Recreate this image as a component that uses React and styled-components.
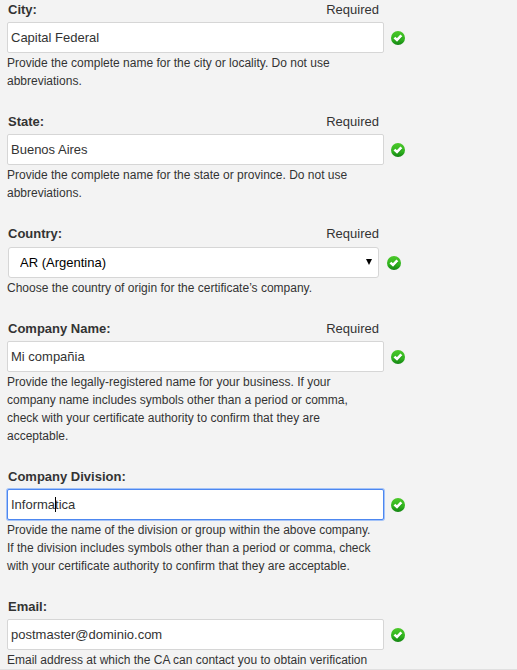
import React, { useId } from 'react'
import styled, { createGlobalStyle } from 'styled-components'

const GlobalStyle = createGlobalStyle`
    html {
        overflow: hidden;
    }
    body {
        margin: 0;
        background: #f3f3f3;
        color: #333;
        font-family: "Liberation Sans", Arial, sans-serif;
    }
`
const Form = styled.form`
    padding-top: 1px;
    border-bottom: 1px solid #e0e0e0;
`
const Field = styled.div`
    max-width: 377px;
    margin: 0 30px 23px 7px;
    &:last-child {
        margin-bottom: 0;
    }
`
const FieldHeader = styled.div`
    display: flex;
    justify-content: space-between;
    padding: 0 5px 0 1px;
    font-size: 13px;
    line-height: 18px;
    margin-bottom: 3px;
`
const Label = styled.label`
    font-weight: 700;
`
const ControlRow = styled.div`
    display: flex;
    align-items: center;
    gap: ${({ $select }) => ($select ? '8px' : '7px')};
    padding: ${({ $select }) => ($select ? '1px 0 0 1px' : '0')};
    margin-right: ${({ $select }) => ($select ? '-17px' : '-21px')};
`
const Control = styled.div`
    position: relative;
    display: flex;
    flex: 1;
    min-width: 0;
`
const TextInput = styled.input`
    flex: 1;
    min-width: 0;
    box-sizing: border-box;
    height: 31px;
    padding: 0 3px;
    border: 1px solid ${({ $active }) => ($active ? '#4d87f0' : '#d6d6d6')};
    border-radius: 2px;
    background: #fff;
    box-shadow: ${({ $active }) => ($active ? '0 0 0 1px #a4c3f8' : 'none')};
    color: #333;
    font: 13px "Liberation Sans", Arial, sans-serif;
    outline: none;
`
const Caret = styled.span`
    position: absolute;
    left: 48px;
    top: 8px;
    width: 1px;
    height: 15px;
    background: #000;
`
const Select = styled.select`
    flex: 1;
    min-width: 0;
    box-sizing: border-box;
    height: 31px;
    padding: 0 11px;
    border: 1px solid #d6d6d6;
    border-radius: 3px;
    background: #fff;
    color: #000;
    font: 13px "Liberation Sans", Arial, sans-serif;
    appearance: none;
    outline: none;
`
const Arrow = styled.svg`
    position: absolute;
    right: 7px;
    top: 12px;
    pointer-events: none;
`
const CheckSvg = styled.svg`
    flex: none;
    display: block;
`
const Help = styled.p`
    margin: 0;
    padding: 1px 8px 0 0;
    font-size: 12px;
    line-height: 18px;
`

const Check = () => {
    const id = useId()
    return (
        <CheckSvg width="14" height="14" viewBox="0 0 14 14" aria-hidden="true">
            <defs>
                <linearGradient id={id} x1="0" y1="0" x2="0" y2="1">
                    <stop offset="0" stopColor="#4cc82a" />
                    <stop offset="0.6" stopColor="#30b41e" />
                    <stop offset="1" stopColor="#128212" />
                </linearGradient>
            </defs>
            <circle cx="7" cy="7" r="7" fill={`url(#${id})`} />
            <path d="M3.9 7.6l2.4 2.2 4.3-4.5" fill="none" stroke="#127012" strokeOpacity="0.5" strokeWidth="2.6" />
            <path d="M3.4 6.6l2.6 2.4 4.4-4.6" fill="none" stroke="#fff" strokeWidth="2.6" />
        </CheckSvg>
    )
}

const fields = [
    { label: 'City:', required: true, value: 'Capital Federal', help: 'Provide the complete name for the city or locality. Do not use abbreviations.' },
    { label: 'State:', required: true, value: 'Buenos Aires', help: 'Provide the complete name for the state or province. Do not use abbreviations.' },
    { label: 'Country:', required: true, options: ['AR (Argentina)'], help: 'Choose the country of origin for the certificate’s company.' },
    { label: 'Company Name:', required: true, value: 'Mi compañia', help: 'Provide the legally-registered name for your business. If your company name includes symbols other than a period or comma, check with your certificate authority to confirm that they are acceptable.' },
    { label: 'Company Division:', value: 'Informatica', active: true, help: 'Provide the name of the division or group within the above company. If the division includes symbols other than a period or comma, check with your certificate authority to confirm that they are acceptable.' },
    { label: 'Email:', value: 'postmaster@dominio.com', help: 'Email address at which the CA can contact you to obtain verification' },
]

const FormField = ({ label, required, value, options, active, help }) => {
    const id = useId()
    return (
        <Field>
            <FieldHeader>
                <Label htmlFor={id}>{label}</Label>
                {required && <span>Required</span>}
            </FieldHeader>
            <ControlRow $select={!!options}>
                <Control>
                    {options ? (
                        <>
                            <Select id={id}>{options.map((o) => <option key={o}>{o}</option>)}</Select>
                            <Arrow width="6" height="6" viewBox="0 0 6 6" aria-hidden="true">
                                <path d="M0 0h6L3 6z" fill="#000" />
                            </Arrow>
                        </>
                    ) : (
                        <TextInput id={id} defaultValue={value} $active={active} />
                    )}
                    {active && <Caret />}
                </Control>
                <Check />
            </ControlRow>
            <Help>{help}</Help>
        </Field>
    )
}

const App = () => (
    <>
        <GlobalStyle />
        <Form>
            {fields.map((field) => <FormField key={field.label} {...field} />)}
        </Form>
    </>
)

export default App
